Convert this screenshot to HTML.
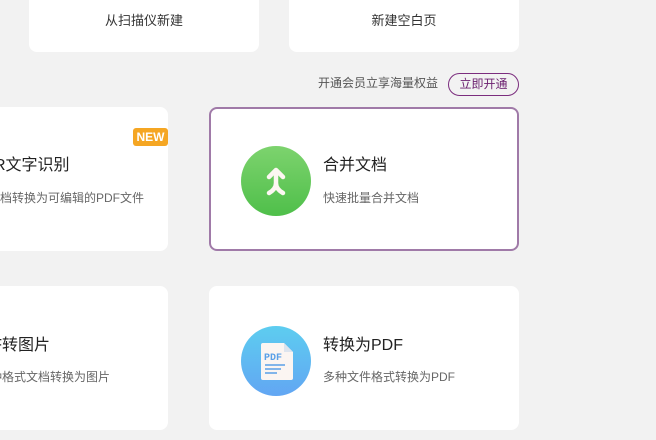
<!DOCTYPE html>
<html><head><meta charset="utf-8"><style>
*{margin:0;padding:0;box-sizing:border-box}
body{width:656px;height:440px;background:#f2f2f2;position:relative;overflow:hidden;font-family:"Liberation Sans","Noto Sans CJK SC",sans-serif}
.wrap{position:absolute;left:0;top:0;width:656px;height:440px;overflow:hidden}
.c{position:absolute;background:#fff;border-radius:8px;overflow:hidden}
.t{position:absolute;font-size:16px;color:#222;white-space:nowrap;line-height:20px}
.d{position:absolute;font-size:12px;color:#666;white-space:nowrap;line-height:16px}
.ic{position:absolute;width:70px;height:70px;border-radius:50%}
</style></head><body><div class="wrap">
<div class="c" style="left:29px;top:-10px;width:230px;height:62px"><div style="position:absolute;top:20px;width:100%;text-align:center;font-size:13px;color:#333">从扫描仪新建</div></div>
<div class="c" style="left:289px;top:-10px;width:230px;height:62px"><div style="position:absolute;top:20px;width:100%;text-align:center;font-size:13px;color:#333">新建空白页</div></div>
<div style="position:absolute;left:318px;top:75px;font-size:12px;color:#555;line-height:16px">开通会员立享海量权益</div>
<div style="position:absolute;left:448px;top:73px;width:71px;height:23px;border:1.5px solid #7b2d7e;border-radius:12px;font-size:12px;color:#6a1d6e;text-align:center;line-height:20px">立即开通</div>

<div class="c" style="left:-142px;top:107px;width:310px;height:144px">
<div style="position:absolute;right:0;top:21px;width:35px;height:18px;background:#f5a623;border-radius:3px;color:#fff;font-size:12px;font-weight:bold;text-align:center;line-height:18px">NEW</div>
<div class="t" style="left:112px;top:49px">OCR文字识别</div>
<div class="d" style="left:118px;top:83px">将文档转换为可编辑的PDF文件</div>
</div>
<div class="c" style="left:209px;top:107px;width:310px;height:144px;box-shadow:inset 0 0 0 2px #a07aa8">
<div class="ic" style="left:32px;top:39px;background:linear-gradient(#7dd36e,#4fbf4a)"></div>
<svg style="position:absolute;left:50px;top:57px" width="34" height="34" viewBox="0 0 34 34"><path d="M17 9 L17 19 Q17 25 10 29 M17 19 Q17 25 24 29" stroke="#fdf7f2" stroke-width="4.5" fill="none" stroke-linecap="round" stroke-linejoin="round"/><path d="M10 13 L17 6 L24 13" stroke="#fdf7f2" stroke-width="4.5" fill="none" stroke-linecap="round" stroke-linejoin="round"/></svg>
<div class="t" style="left:114px;top:49px">合并文档</div>
<div class="d" style="left:114px;top:83px">快速批量合并文档</div>
</div>

<div class="c" style="left:-142px;top:286px;width:310px;height:144px">
<div class="t" style="left:112px;top:50px">PDF转图片</div>
<div class="d" style="left:108px;top:83px">将多种格式文档转换为图片</div>
</div>
<div class="c" style="left:209px;top:286px;width:310px;height:144px">
<div class="ic" style="left:32px;top:40px;background:linear-gradient(#5dcdf0,#62a6f3)"></div>
<svg style="position:absolute;left:50px;top:56px" width="36" height="40" viewBox="0 0 36 40"><path d="M2 3 Q2 1 4 1 L25 1 L34 10 L34 36 Q34 38 32 38 L4 38 Q2 38 2 36Z" fill="#fbf5f2"/><path d="M25 1 L25 10 L34 10Z" fill="#dde4ee"/><text x="5" y="18" font-size="10" font-weight="bold" fill="#5aa0e8" font-family="Liberation Mono,monospace">PDF</text><path d="M6 23H26M6 27H22M6 31H18" stroke="#5aa0e8" stroke-width="1.5"/></svg>
<div class="t" style="left:114px;top:50px">转换为PDF</div>
<div class="d" style="left:114px;top:83px">多种文件格式转换为PDF</div>
</div>
</div></body></html>
